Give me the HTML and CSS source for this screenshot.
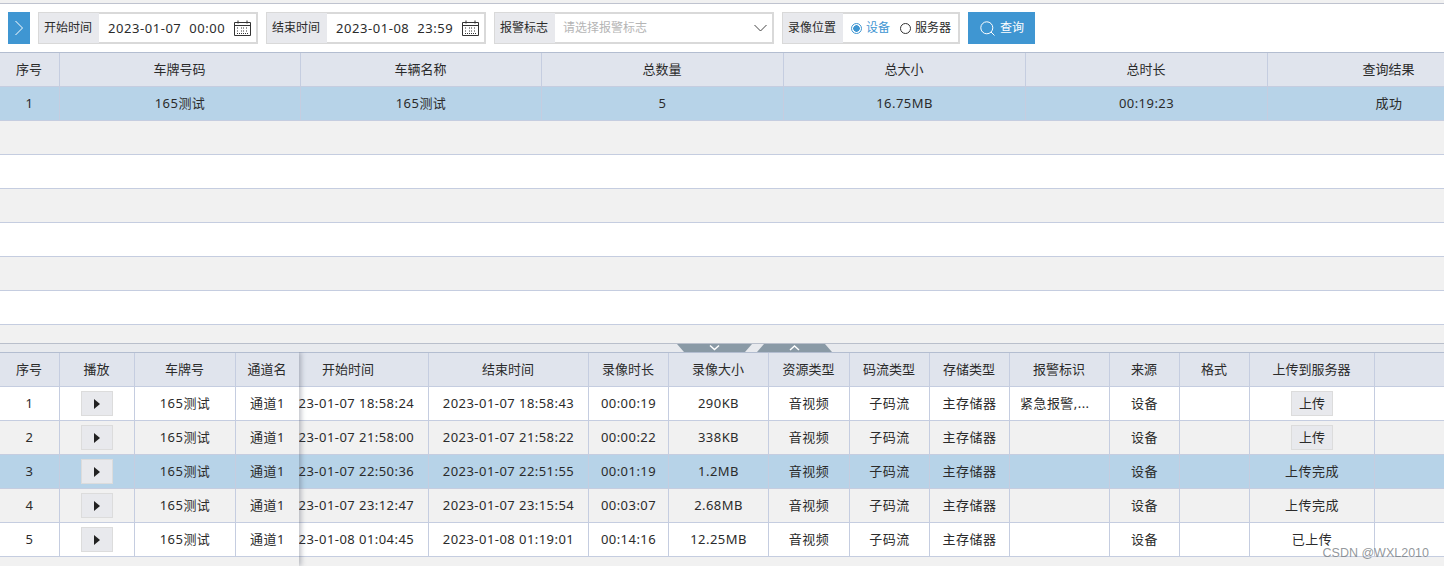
FILE: index.html
```html
<!DOCTYPE html>
<html lang="zh-CN">
<head>
<meta charset="utf-8">
<title>录像查询</title>
<link rel="stylesheet" href="styles.css">
</head>
<body>
<div class="page">
  <div class="toolbar">
    <button class="toggle"><svg width="10" height="16" viewBox="0 0 10 16"><path d="M1.5 1 L8.5 8 L1.5 15" fill="none" stroke="#fff" stroke-width="1"/></svg></button>
    <div class="field w-time">
      <span class="label">开始时间</span>
      <span class="value"><span class="date">2023-01-07&nbsp;&nbsp;00:00</span>
        <svg class="cal" width="17" height="16" viewBox="0 0 17 16"><path d="M.5 2.5h16v13H.5zM.5 5.5h16M4 .5v3M13 .5v3" fill="none" stroke="#333"/><path d="M3 8h2M7 8h3M12 8h2M3 11h2M7 11h3M12 11h2M3 13.5h11" stroke="#333" stroke-dasharray="1 1" fill="none"/></svg>
      </span>
    </div>
    <div class="field w-time">
      <span class="label">结束时间</span>
      <span class="value"><span class="date">2023-01-08&nbsp;&nbsp;23:59</span>
        <svg class="cal" width="17" height="16" viewBox="0 0 17 16"><path d="M.5 2.5h16v13H.5zM.5 5.5h16M4 .5v3M13 .5v3" fill="none" stroke="#333"/><path d="M3 8h2M7 8h3M12 8h2M3 11h2M7 11h3M12 11h2M3 13.5h11" stroke="#333" stroke-dasharray="1 1" fill="none"/></svg>
      </span>
    </div>
    <div class="field w-alarm">
      <span class="label">报警标志</span>
      <span class="value select"><span class="placeholder">请选择报警标志</span>
        <svg width="13" height="8" viewBox="0 0 13 8"><path d="M.5 1 L6.5 7 L12.5 1" fill="none" stroke="#444"/></svg>
      </span>
    </div>
    <div class="field w-loc">
      <span class="label">录像位置</span>
      <span class="value radios">
        <span class="radio on"><i class="dot"></i>设备</span>
        <span class="radio"><i class="dot"></i>服务器</span>
      </span>
    </div>
    <button class="search"><svg width="15" height="15" viewBox="0 0 15 15"><circle cx="6.8" cy="6.8" r="6" fill="none" stroke="#fff"/><path d="M11 11 L14.5 14.5" stroke="#fff"/></svg>查询</button>
  </div>

  <div class="grid top">
    <div class="row head"><span>序号</span><span>车牌号码</span><span>车辆名称</span><span>总数量</span><span>总大小</span><span>总时长</span><span>查询结果</span></div>
    <div class="row sel"><span>1</span><span>165测试</span><span>165测试</span><span>5</span><span>16.75MB</span><span>00:19:23</span><span>成功</span></div>
    <div class="row alt blank"></div>
    <div class="row blank"></div>
    <div class="row alt blank"></div>
    <div class="row blank"></div>
    <div class="row alt blank"></div>
    <div class="row blank"></div>
  </div>
  <div class="gap"></div>

  <div class="splitter">
    <svg width="75" height="8" viewBox="0 0 75 8"><path d="M0 0H75L68 8H7Z" fill="#8a9aa6"/><path d="M33 1.5L37.5 5.5L42 1.5" fill="none" stroke="#fff" stroke-width="1.5"/></svg>
    <svg width="75" height="8" viewBox="0 0 75 8"><path d="M7 0H68L75 8H0Z" fill="#8a9aa6"/><path d="M33 6L37.5 2L42 6" fill="none" stroke="#fff" stroke-width="1.5"/></svg>
  </div>

  <div class="detail">
    <div class="grid scroll">
      <div class="row head"><span></span><span>开始时间</span><span>结束时间</span><span>录像时长</span><span>录像大小</span><span>资源类型</span><span>码流类型</span><span>存储类型</span><span>报警标识</span><span>来源</span><span>格式</span><span>上传到服务器</span><span></span></div>
      <div class="row"><span></span><span>2023-01-07 18:58:24</span><span>2023-01-07 18:58:43</span><span>00:00:19</span><span>290KB</span><span>音视频</span><span>子码流</span><span>主存储器</span><span class="left">紧急报警,...</span><span>设备</span><span></span><span><button class="btn">上传</button></span><span></span></div>
      <div class="row alt"><span></span><span>2023-01-07 21:58:00</span><span>2023-01-07 21:58:22</span><span>00:00:22</span><span>338KB</span><span>音视频</span><span>子码流</span><span>主存储器</span><span></span><span>设备</span><span></span><span><button class="btn">上传</button></span><span></span></div>
      <div class="row sel"><span></span><span>2023-01-07 22:50:36</span><span>2023-01-07 22:51:55</span><span>00:01:19</span><span>1.2MB</span><span>音视频</span><span>子码流</span><span>主存储器</span><span></span><span>设备</span><span></span><span>上传完成</span><span></span></div>
      <div class="row alt"><span></span><span>2023-01-07 23:12:47</span><span>2023-01-07 23:15:54</span><span>00:03:07</span><span>2.68MB</span><span>音视频</span><span>子码流</span><span>主存储器</span><span></span><span>设备</span><span></span><span>上传完成</span><span></span></div>
      <div class="row"><span></span><span>2023-01-08 01:04:45</span><span>2023-01-08 01:19:01</span><span>00:14:16</span><span>12.25MB</span><span>音视频</span><span>子码流</span><span>主存储器</span><span></span><span>设备</span><span></span><span>已上传</span><span></span></div>
    </div>
    <div class="grid frozen">
      <div class="row head"><span>序号</span><span>播放</span><span>车牌号</span><span>通道名</span></div>
      <div class="row"><span>1</span><span><button class="btn play"><i></i></button></span><span>165测试</span><span>通道1</span></div>
      <div class="row alt"><span>2</span><span><button class="btn play"><i></i></button></span><span>165测试</span><span>通道1</span></div>
      <div class="row sel"><span>3</span><span><button class="btn play"><i></i></button></span><span>165测试</span><span>通道1</span></div>
      <div class="row alt"><span>4</span><span><button class="btn play"><i></i></button></span><span>165测试</span><span>通道1</span></div>
      <div class="row"><span>5</span><span><button class="btn play"><i></i></button></span><span>165测试</span><span>通道1</span></div>
    </div>
    <div class="watermark">CSDN @WXL2010</div>
  </div>
</div>
</body>
</html>
```

FILE: styles.css
```css
* { box-sizing: border-box; }
html, body { margin: 0; padding: 0; }
body {
  width: 1444px;
  height: 566px;
  overflow: hidden;
  background: #f1f1f1;
  color: #2b2b2b;
  font: 13px/1 "Noto Sans", "Noto Sans CJK SC", sans-serif;
}
.page { display: flex; flex-direction: column; height: 566px; padding-top: 3px; overflow: hidden; }

.toolbar {
  display: flex;
  align-items: flex-start;
  height: 49px;
  padding: 8px 0 0 8px;
  gap: 8px;
  background: #fff;
  border-top: 1px solid #bfc3cf;
}
.toggle { width: 22px; height: 32px; border: 0; padding: 0; background: #3f96d2; display: flex; align-items: center; justify-content: center; }
.field { display: flex; height: 32px; border: 1px solid #d9d9d9; box-shadow: inset 0 0 0 1px #d9d9d9; background: #fff; }
.label { display: flex; align-items: center; flex: none; width: 60px; padding-left: 5px; height: 100%; background: #e8e9ed; color: #2b2b2b; font-size: 12px; }
.value { flex: 1; display: flex; align-items: center; justify-content: space-between; }
.w-time { width: 220px; }
.w-time .value { padding: 0 6px 0 9px; }
.date { letter-spacing: .55px; white-space: nowrap; }
.w-alarm { width: 280px; }
.select { padding: 0 6px 0 8px; }
.placeholder { color: #b5b5b5; font-size: 12px; }
.w-loc { width: 178px; }
.radios { justify-content: flex-start; gap: 10px; padding-left: 8px; font-size: 12px; }
.radio { display: flex; align-items: center; gap: 4px; }
.radio.on { color: #3f96d2; }
.dot { width: 11px; height: 11px; border: 1px solid #333; border-radius: 50%; background: #fff; }
.on .dot { border-color: #3f96d2; background: radial-gradient(circle, #3f96d2 0 3px, #fff 3.5px); }
.search { display: flex; align-items: center; gap: 5px; width: 67px; height: 32px; padding: 0 0 0 12px; border: 0; background: #3f96d2; color: #fff; font: 12px/1 "Noto Sans", "Noto Sans CJK SC", sans-serif; }

.grid { background: #f1f1f1; }
.row { display: grid; height: 34px; border-bottom: 1px solid #c5cde0; background: #fff; }
.row > span {
  display: flex; align-items: center; justify-content: center;
  border-right: 1px solid #c5cde0;
  letter-spacing: .45px;
  white-space: nowrap;
  overflow: hidden;
}
.row > span:last-child { border-right: 0; }
.row > span.left { justify-content: flex-start; padding-left: 10px; }
.head { height: 35px; background: #e0e4ed; border-top: 1px solid #b3bdd0; }
.head > span { letter-spacing: 0; padding-right: 1px; }
.alt { background: #f1f1f1; }
.sel { background: #b7d3e8; }

.top .row { grid-template-columns: 60px 241px 241px 242px 242px 242px 242px; width: 1444px; overflow: hidden; }
.top .blank { display: block; }
.gap { flex: none; height: 19px; border-bottom: 1px solid #b9bfcb; }

.splitter { flex: none; display: flex; justify-content: flex-start; gap: 5px; height: 8px; padding-left: 677px; background: #e8eaee; }

.detail { position: relative; flex: 1; min-height: 0; overflow: hidden; }
.scroll .row { grid-template-columns: 269px 160px 160px 80px 100px 81px 80px 80px 100px 70px 70px 125px 1fr; }
.frozen {
  position: absolute; left: 0; top: 0; bottom: 0; width: 299px;
  box-shadow: 2px 0 5px rgba(60, 70, 90, .35);
}
.frozen .row { grid-template-columns: 60px 75px 101px 63px; }
.btn { height: 25px; width: 42px; padding: 0; border: 1px solid #dcdcdc; background: #e8e9ed; color: #2b2b2b; font: inherit; }
.play { width: 32px; display: flex; align-items: center; justify-content: center; }
.play i { width: 0; height: 0; border-left: 6px solid #222; border-top: 5.5px solid transparent; border-bottom: 5.5px solid transparent; }

.watermark {
  position: absolute; right: 15px; bottom: 7px;
  color: rgba(120, 125, 130, .8);
  font: 12.5px/1 "Liberation Sans", sans-serif;
}
```
